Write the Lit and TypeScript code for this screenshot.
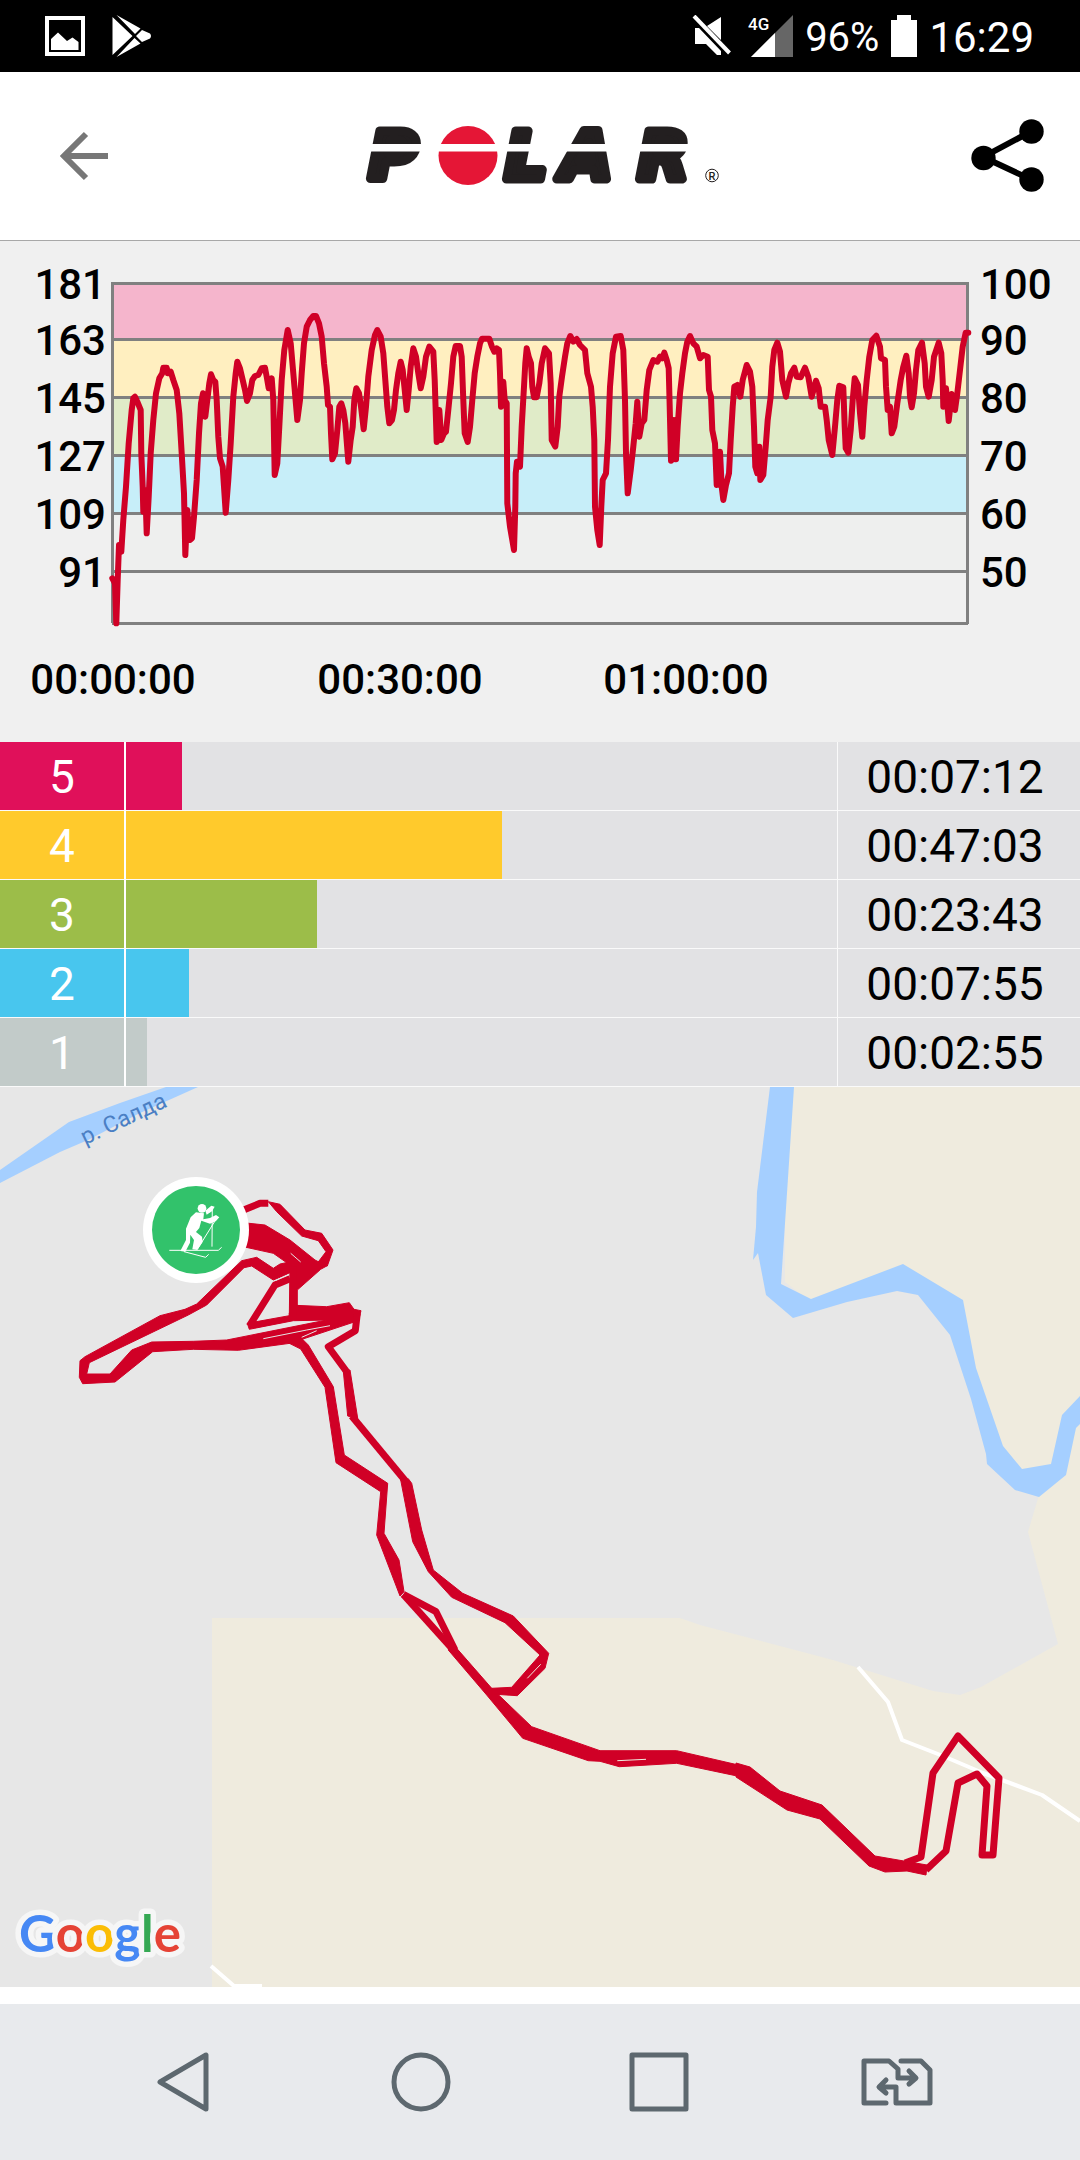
import { LitElement, html, svg, css } from "lit";
import { customElement } from "lit/decorators.js";

type Pair = [number, number];

/** Converts a flat "x,y x,y" list of local units into drawing units. */
const place = (points: string, ox: number, oy: number, k = 3): string =>
  points
    .trim()
    .split(/\s+/)
    .map((p) => {
      const [x, y] = p.split(",").map(Number) as Pair;
      return `${(ox + x / k).toFixed(1)},${(oy + y / k).toFixed(1)}`;
    })
    .join(" ");

/* Heart-rate samples, stored as three consecutive segments of the session. */
const heartRate = [
  place(
    `337,1015 345,1030 349,1150 353,1020 357,915 364,935 370,840 378,740 386,610 395,510 400,475 405,470 412,485 422,510
     424,640 428,740 430,815 436,750 440,880 446,770 452,640 460,540 468,460 478,415 487,400 490,383 500,383 503,400
     512,395 520,420 530,450 538,520 545,640 552,760 556,945 562,810 570,900 576,895 582,830 590,720 597,580 603,490
     609,460 616,530 622,480 628,430 633,403 640,420 646,425 650,480 655,590 660,655 668,680 677,818 685,720 692,610
     700,470 707,400 712,365 720,385 728,420 735,450 741,483 750,460 757,420 765,408 775,405 785,385 795,383 800,410
     806,445 815,415 820,480 824,705 832,670 838,560 845,420 853,330 863,270 872,310 880,400 892,540 900,480 905,400
     912,310 920,260 930,240 940,228 948,228 957,250 965,290 972,370 980,440 984,495 990,500 993,580 997,658 1005,640
     1012,570 1018,500 1024,490 1030,510 1036,550 1045,665 1052,600 1058,560 1063,480 1069,445 1077,460 1083,500
     1091,568 1098,500 1105,410 1115,330 1125,285`,
    0,
    0
  ),
  place(
    `22,270 32,290 40,340 46,420 52,500 58,550 66,540 72,510 78,450 85,400 92,365 98,390 104,450 110,510 116,450 122,380
     130,325 138,350 145,400 152,445 160,410 168,350 178,320 190,335 194,420 200,606 208,510 214,600 222,580 228,575
     235,510 243,430 250,350 257,318 270,318 275,350 280,480 284,580 293,606 300,560 307,480 314,400 322,350 330,310
     336,296 358,296 366,320 373,335 380,325 387,330 390,400 393,500 400,425 404,480 410,490 411,640 412,790 420,860
     432,930 436,800 437,700 441,665 450,680 455,560 462,440 466,370 470,325 476,350 483,370 487,440 492,472 500,472
     508,430 515,370 525,325 537,340 542,430 545,600 556,620 563,560 568,470 576,410 585,350 592,310 601,288 610,305
     620,297 630,315 645,330 652,400 663,440 668,500 673,600 675,800 682,870 689,915 694,800 698,720 708,700 714,600
     720,440 728,340 738,290 752,288 760,330 765,480 768,640 773,760 782,690 790,620 797,550 802,485 808,590 815,550
     823,540 830,450 838,390 850,360 862,365 870,350 877,355 883,338 890,360 896,385 899,500 903,662 912,540 918,658
     923,560 930,460 937,400 945,340 952,305 960,288 970,310 980,320 990,355 1000,345 1013,350`,
    370,
    0
  ),
  place(
    `27,450 33,470 37,570 45,610 50,735 60,635 65,740 70,780 78,735 87,700 92,600 98,500 103,440 112,435 121,470 128,420
     140,375 150,395 157,440 162,560 166,680 172,700 178,620 181,720 190,705 197,620 203,540 212,470 217,380 223,330
     232,308 240,335 247,420 258,470 265,430 273,400 283,383 290,410 302,412 315,383 325,410 335,470 348,422 356,445
     362,500 375,500 380,540 386,600 397,645 405,560 412,480 418,437 430,442 434,560 437,625 445,638 452,570 458,480
     464,415 474,435 480,520 487,590 493,500 500,420 508,350 517,300 529,287 540,320 543,355 555,360 558,440 563,510
     570,500 575,580 583,560 592,490 602,420 610,380 619,347 626,400 630,470 635,502 642,460 648,390 655,330 666,308
     674,370 678,440 686,470 695,420 702,350 716,308 724,340 728,420 730,500 738,445 746,543 755,462 765,510 772,460
     780,390 788,320 797,278 805,278`,
    700,
    0
  ),
].join(" ");

const gridLines = [43, 99, 157, 215, 273, 331, 383];
const bands = ["#f5b5cc", "#ffefc0", "#e0ebc8", "#c7eef9", "#eeefee"];
const bpm = [181, 163, 145, 127, 109, 91];
const percent = [100, 90, 80, 70, 60, 50];
const ticks: Array<[string, number]> = [
  ["00:00:00", 113],
  ["00:30:00", 400],
  ["01:00:00", 686],
];

const zones = [
  { id: 5, share: 7.9, time: "00:07:12" },
  { id: 4, share: 52.9, time: "00:47:03" },
  { id: 3, share: 26.8, time: "00:23:43" },
  { id: 2, share: 8.9, time: "00:07:55" },
  { id: 1, share: 3, time: "00:02:55" },
];

/* Map overlay, drawn in the northern and southern halves of the route. */
const north = (p: string) => place(p, 60, 53);
const south = (p: string) => place(p, 340, 313);

const trackAreas = [
  north(`550,248 615,255 690,300 765,360 800,378 782,388 712,450 712,500 688,530 690,375 640,340 550,320`),
  north(
    `545,362 410,492 375,508 300,527 75,650 60,662 58,712 68,731 165,726 278,635 400,628 535,631 690,610 880,547 890,530
     800,540 500,600 400,604 275,606 215,630 150,702 80,702 88,668 385,525 440,495 552,383 575,378 640,420 692,398
     692,365 660,372 640,385 590,352`
  ),
  north(`688,520 705,496 800,500 868,488 882,508 903,512 895,545 860,545 810,540 700,542 568,568 562,550 688,527`),
  north(
    `680,606 720,590 745,615 820,740 853,945 983,1030 972,1180 1017,1260 1032,1355 1020,1368 950,1185 962,1055 828,968
     795,742 722,627`
  ),
  north(`850,693 870,690 893,835 863,828`),
  north(`625,185 660,193 735,270 785,280 819,330 802,378 770,372 798,335 775,302 725,288 650,215`),
  south(
    `330,730 350,745 455,865 575,980 780,1052 1010,1052 1225,1102 1275,1140 1275,1180 1187,1127 1010,1090 838,1100
     780,1084 745,1082 548,1015 440,885 325,750`
  ),
  south(
    `182,240 205,236 215,250 245,390 280,510 368,580 520,648 626,760 615,805 532,887 455,882 455,865 515,862 600,765
     495,668 335,592 265,515 218,425`
  ),
  `750,680 780,704 822,718 875,769 927,778 926,788 907,784 885,785 869,779 820,732 787,723 736,690 736,676`,
];
const trackLines = [
  north(`545,212 600,190 625,190`),
  north(`690,416 645,435 568,558`),
  north(`700,380 700,525`),
  north(`892,520 886,572 805,620 860,695`),
  north(`875,828 1036,1022`),
  south(`190,583 288,635 345,750`),
  south(`190,583 340,750`),
  `905,776 921,770 933,686 958,649 999,691 993,768 982,768 987,699 977,687 958,696 946,764 926,783`,
];
const gaps = [
  [north(`610,596 740,570 810,557`), "#e7e7e7"],
  [north(`725,592 770,572`), "#e7e7e7"],
  [north(`692,340 722,366`), "#e7e7e7"],
  [north(`648,421 688,402`), "#e7e7e7"],
  [south(`832,1082 918,1078`), "#efebde"],
  [south(`562,835 602,793`), "#efebde"],
];

@customElement("polar-logo")
export class PolarLogo extends LitElement {
  static styles = css`
    :host {
      display: block;
    }
    .mark {
      display: block;
      width: 360px;
      height: 100px;
      overflow: visible;
    }
    .letter {
      font: italic 700 66px "DejaVu Sans", sans-serif;
      fill: #231f20;
      stroke: #231f20;
      stroke-width: 9;
      stroke-linejoin: round;
    }
    .reg {
      font: 500 11px Roboto, sans-serif;
      fill: #231f20;
    }
  `;

  render() {
    return html`
      <svg class="mark" viewBox="0 -20 360 100" role="img" aria-label="Polar">
        <text class="letter" x="9" y="53">P</text>
        <text class="letter" x="145" y="53">L</text>
        <text class="letter" x="201" y="53">A</text>
        <text class="letter" x="278" y="53">R</text>
        <circle cx="108" cy="29.500" r="29.500" fill="#e51636" />
        <path d="M0 18H350V25.500H0Z" fill="#fff" />
        <circle cx="352" cy="49.500" r="6.300" fill="none" stroke="#231f20" />
        <text class="reg" x="352" y="53.500" text-anchor="middle">R</text>
      </svg>
    `;
  }
}

@customElement("status-bar")
export class StatusBar extends LitElement {
  static styles = css`
    :host {
      display: flex;
      align-items: center;
      gap: 12px;
      height: 72px;
      padding: 0 46px 0 45px;
      background: #000;
      color: #fff;
      font: 42px/48px Roboto, sans-serif;
    }
    .icon {
      display: block;
      fill: #fff;
      height: 42px;
      flex: none;
    }
    .photo {
      width: 40px;
    }
    .store {
      width: 40px;
      margin-left: 15px;
    }
    .push {
      margin-left: auto;
    }
    .mute {
      width: 44px;
    }
    .signal {
      width: 46px;
      height: 62px;
      overflow: visible;
    }
    .net {
      font: 500 17px Roboto, sans-serif;
    }
    .battery {
      width: 26px;
    }
    .level,
    .clock {
      padding-top: 3px;
    }
    .level {
      font-size: 40px;
    }
  `;

  render() {
    return html`
      <svg class="icon photo" viewBox="0 0 40 42" aria-hidden="true">
        <path fill-rule="evenodd" d="M0 1H40V41H0ZM4 5V37H36V5Z" />
        <path d="M6 35V24L13 17.500L22 26L27.500 22.500L33.500 27V35Z" />
      </svg>
      <svg class="icon store" viewBox="0 0 40 42" aria-hidden="true">
        <path d="M.5 2 20.500 21 .5 40ZM4.500 0 28.500 13.500 23 19ZM30 15 38 18.500Q40 21 38 23.500L30 27 24 21ZM4.500 42 28.500 28.500 22.500 23Z" />
      </svg>
      <svg class="icon mute push" viewBox="0 0 44 42" aria-hidden="true">
        <path d="M30 2V25L16 11ZM4 13H8L30 36V40H26L15 29H4Z" />
        <path d="M3 1 38.500 38" stroke="#fff" stroke-width="4" />
      </svg>
      <svg class="icon signal" viewBox="0 -10 46 62" aria-label="4G">
        <path d="M46 0V42H4Z" fill="#666" />
        <path d="M28 18V42H4Z" />
        <text class="net" x="1" y="15">4G</text>
      </svg>
      <span class="level">96%</span>
      <svg class="icon battery" viewBox="0 0 26 42" aria-hidden="true">
        <path d="M6 0H20V5H26V42H0V5H6Z" />
      </svg>
      <span class="clock">16:29</span>
    `;
  }
}

@customElement("heart-chart")
export class HeartChart extends LitElement {
  static styles = css`
    :host {
      display: block;
      background: #f0f0f0;
    }
    .plot {
      display: block;
      width: 100%;
      height: auto;
    }
    .grid {
      fill: none;
      stroke: #808080;
      stroke-width: 3;
    }
    .trace {
      fill: none;
      stroke: #d00026;
      stroke-width: 6;
      stroke-linejoin: round;
      stroke-linecap: round;
    }
    .axis {
      font: 500 42px Roboto, sans-serif;
      fill: #000;
    }
  `;

  render() {
    return html`
      <svg class="plot" viewBox="0 1 1080 501" role="img" aria-label="Heart rate over time">
        ${bands.map(
          (fill, i) =>
            svg`<rect x="112" y=${gridLines[i]} width="856" height=${gridLines[i + 1] - gridLines[i]} fill=${fill} />`
        )}
        <path
          class="grid"
          d="M112.500 42V383M967.500 42V384${gridLines.map((y) => `M112 ${y + 0.5}H968`).join("")}"
        />
        <polyline class="trace" points=${heartRate} />
        ${bpm.map(
          (v, i) => svg`<text class="axis" x="106" y=${gridLines[i] + 16} text-anchor="end">${v}</text>`
        )}
        ${percent.map((v, i) => svg`<text class="axis" x="980" y=${gridLines[i] + 16}>${v}</text>`)}
        ${ticks.map(([t, x]) => svg`<text class="axis" x=${x} y="454" text-anchor="middle">${t}</text>`)}
      </svg>
    `;
  }
}

@customElement("zone-table")
export class ZoneTable extends LitElement {
  static styles = css`
    :host {
      display: block;
    }
    .zones {
      width: 100%;
      table-layout: fixed;
      border-spacing: 0;
      background: #e2e2e4;
      font: 46px/66px Roboto, sans-serif;
      color: #000;
    }
    .label,
    .track,
    .time {
      box-sizing: border-box;
      padding: 0;
      height: 69px;
      border-bottom: 1px solid #fafafa;
      font-weight: 400;
    }
    .label {
      width: 126px;
      padding-top: 2px;
      border-right: 2px solid #fff;
      color: #fff;
      text-align: center;
    }
    .time {
      width: 243px;
      padding: 2px 8px 0 0;
      border-left: 1px solid #fafafa;
      text-align: center;
    }
    .bar {
      height: 68px;
    }
    .z5 {
      background: #e0105a;
    }
    .z4 {
      background: #ffca2c;
    }
    .z3 {
      background: #9cbd49;
    }
    .z2 {
      background: #48c6ee;
    }
    .z1 {
      background: #c2cbc9;
    }
  `;

  render() {
    return html`
      <table class="zones" aria-label="Time in heart rate zones">
        <tbody>
          ${zones.map(
            (z) => html`
              <tr>
                <th class="label z${z.id}" scope="row">${z.id}</th>
                <td class="track"><div class="bar z${z.id}" style="width:${z.share}%"></div></td>
                <td class="time">${z.time}</td>
              </tr>
            `
          )}
        </tbody>
      </table>
    `;
  }
}

@customElement("route-map")
export class RouteMap extends LitElement {
  static styles = css`
    :host {
      display: block;
      background: #e7e7e7;
    }
    .map {
      display: block;
      width: 100%;
      height: auto;
    }
    .land {
      fill: #efebde;
    }
    .water {
      fill: #a5cfff;
    }
    .road {
      fill: none;
      stroke: #fff;
      stroke-width: 4;
      stroke-linejoin: round;
    }
    .area {
      fill: #d00026;
      stroke: #d00026;
      stroke-width: 1;
      stroke-linejoin: round;
    }
    .line {
      fill: none;
      stroke: #d00026;
      stroke-width: 7;
      stroke-linejoin: round;
    }
    .gap {
      fill: none;
      stroke-width: 1;
    }
    .river-name {
      font: 23px Roboto, sans-serif;
      fill: #4b7fc4;
    }
    .google {
      font: 700 51px Lato, sans-serif;
      stroke: #f6f6f6;
      stroke-width: 11;
      stroke-linejoin: round;
      paint-order: stroke;
    }
    .blue {
      fill: #4688f4;
    }
    .red {
      fill: #e54335;
    }
    .yellow {
      fill: #fbbd05;
    }
    .green {
      fill: #35a853;
    }
    .pole {
      fill: none;
      stroke: #fff;
      stroke-width: 3;
    }
  `;

  render() {
    return html`
      <svg class="map" viewBox="0 0 1080 900" role="img" aria-label="Route map">
        <path
          class="land"
          d="M785 0V195L811 215L903 180L960 215L973 285L1000 365L1030 390L1039 408L1028 445L1058 557L981 600L960 608L933 604L833 573L700 538L680 531H212V900H1080V0Z"
        />
        <path
          class="water"
          d="M770 0L757 105L756 140L753 173L758 166L766 208L793 231L847 215L897 204L918 208L950 248L971 312L986 367L987 377L1015 403L1039 410L1066 388L1076 341L1080 337V309L1062 328L1051 377L1022 382L1003 359L976 281L963 213L903 177L811 212L781 197L794 0Z"
        />
        <path class="water" d="M166 0L120 16L69 35L0 83V96L60 65L88 53L140 26L198 0Z" />
        <path class="road" d="M858 580L888 615L902 653L943 669L983 686L1002 693L1042 708L1080 734M211 879L234 899H262" />
        <text class="river-name" transform="translate(85 58) rotate(-25)">р. Салда</text>

        ${trackAreas.map((p) => svg`<polygon class="area" points=${p} />`)}
        ${trackLines.map((p) => svg`<polyline class="line" points=${p} />`)}
        ${gaps.map(([p, c]) => svg`<polyline class="gap" points=${p} stroke=${c} />`)}

        <circle cx="196" cy="143" r="53" fill="#fff" />
        <circle cx="196" cy="143" r="44" fill="#32c26b" />
        <g transform="translate(60 53) scale(.3333)" fill="#fff">
          <circle cx="426" cy="205" r="13" />
          <path
            d="M408 217L432 220L430 238L450 234L468 225L478 232L468 243L450 251L424 242L418 264L408 276L426 290L428 306L412 330L397 328L402 300L391 284L390 308L376 335L361 333L378 300V266L392 232ZM436 212L454 197L464 200L456 214L440 224Z"
          />
          <path class="pole" d="M457 200L456 320M470 235L412 328M328 331H475L485 322M372 335L437 352L446 343" />
        </g>

        <text class="google" x="19" y="865"><tspan class="blue">G</tspan><tspan class="red">o</tspan><tspan class="yellow">o</tspan><tspan class="blue">g</tspan><tspan class="green">l</tspan><tspan class="red">e</tspan></text>
      </svg>
    `;
  }
}

@customElement("app-root")
export class AppRoot extends LitElement {
  static styles = css`
    :host {
      display: flex;
      flex-direction: column;
      min-height: 100vh;
      background: #fff;
      font-family: Roboto, sans-serif;
    }
    .header {
      display: grid;
      grid-template-columns: 1fr auto 1fr;
      align-items: center;
      height: 168px;
      padding: 0 36px 0 60px;
      border-bottom: 1px solid #a8a8a8;
    }
    .logo {
      margin-right: 24px;
    }
    .action {
      display: block;
      padding: 0;
      border: 0;
      background: none;
      cursor: pointer;
    }
    .end {
      justify-self: end;
    }
    .glyph {
      display: block;
    }
    .nav {
      display: flex;
      align-items: center;
      height: 156px;
      padding: 0 64px;
      margin-top: auto;
      background: #e8eaed;
    }
    .key {
      display: flex;
      flex: 1;
      justify-content: center;
      padding: 0;
      border: 0;
      background: none;
      cursor: pointer;
    }
    .outline {
      display: block;
      fill: none;
      stroke: #5d686f;
      stroke-width: 5;
      stroke-linejoin: round;
      stroke-linecap: round;
    }
  `;

  render() {
    return html`
      <status-bar></status-bar>
      <header class="header">
        <button class="action" type="button" aria-label="Back">
          <svg class="glyph" width="48" height="50" viewBox="0 0 48 50">
            <path d="M26 3 4 25 26 47M4 25H48" fill="none" stroke="#777" stroke-width="6" />
          </svg>
        </button>
        <polar-logo class="logo"></polar-logo>
        <button class="action end" type="button" aria-label="Share">
          <svg class="glyph" width="73" height="74" viewBox="0 0 73 74">
            <path d="M61 12 12 38 61 61" fill="none" stroke="#000" stroke-width="6" />
            <circle cx="60.500" cy="12.500" r="12.200" />
            <circle cx="12.500" cy="39" r="12.200" />
            <circle cx="60.500" cy="60.500" r="12.200" />
          </svg>
        </button>
      </header>
      <heart-chart></heart-chart>
      <zone-table></zone-table>
      <route-map></route-map>
      <nav class="nav" aria-label="System">
        <button class="key" type="button" aria-label="Back">
          <svg class="outline" width="52" height="60" viewBox="0 0 52 60">
            <path d="M49 3V57L3 30Z" />
          </svg>
        </button>
        <button class="key" type="button" aria-label="Home">
          <svg class="outline" width="60" height="60" viewBox="0 0 60 60">
            <circle cx="30" cy="30" r="27" />
          </svg>
        </button>
        <button class="key" type="button" aria-label="Recent apps">
          <svg class="outline" width="60" height="60" viewBox="0 0 60 60">
            <path d="M3 3H57V57H3Z" />
          </svg>
        </button>
        <button class="key" type="button" aria-label="Switch SIM">
          <svg class="outline" width="72" height="48" viewBox="0 0 72 48">
            <path d="M25 45H3V3H28L37 11V20H54M48 13 55 20 48 26M40 3H60L69 12V45H35V29H19M25 22 18 29 25 35" />
          </svg>
        </button>
      </nav>
    `;
  }
}
